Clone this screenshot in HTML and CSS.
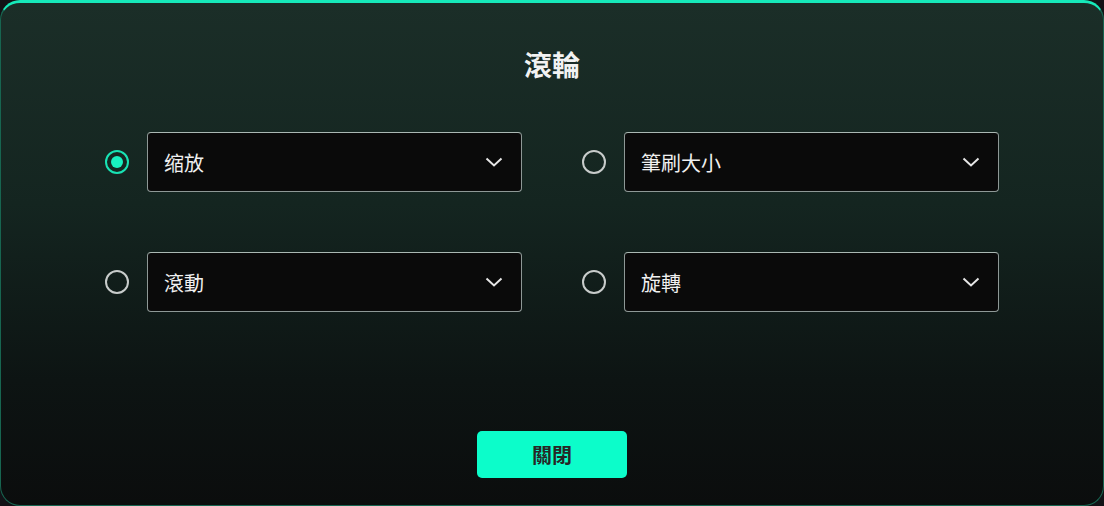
FILE: index.html
```html
<!DOCTYPE html>
<html lang="zh-Hant">
<head>
<meta charset="utf-8">
<link rel="stylesheet" href="styles.css">
</head>
<body>
<div class="panel">
  <h1 class="title">滾輪</h1>
  <div class="grid">
    <div class="option">
      <span class="radio checked"></span>
      <div class="select"><span class="label">缩放</span>
        <svg class="chev" width="18" height="10" viewBox="0 0 18 10"><polyline points="1.5,1.5 9,8.5 16.5,1.5" fill="none" stroke="#e6e6e6" stroke-width="2"/></svg>
      </div>
    </div>
    <div class="option">
      <span class="radio"></span>
      <div class="select"><span class="label">筆刷大小</span>
        <svg class="chev" width="18" height="10" viewBox="0 0 18 10"><polyline points="1.5,1.5 9,8.5 16.5,1.5" fill="none" stroke="#e6e6e6" stroke-width="2"/></svg>
      </div>
    </div>
    <div class="option">
      <span class="radio"></span>
      <div class="select"><span class="label">滾動</span>
        <svg class="chev" width="18" height="10" viewBox="0 0 18 10"><polyline points="1.5,1.5 9,8.5 16.5,1.5" fill="none" stroke="#e6e6e6" stroke-width="2"/></svg>
      </div>
    </div>
    <div class="option">
      <span class="radio"></span>
      <div class="select"><span class="label">旋轉</span>
        <svg class="chev" width="18" height="10" viewBox="0 0 18 10"><polyline points="1.5,1.5 9,8.5 16.5,1.5" fill="none" stroke="#e6e6e6" stroke-width="2"/></svg>
      </div>
    </div>
  </div>
  <button class="close">關閉</button>
</div>
</body>
</html>
```
FILE: styles.css
```css
html, body {
  margin: 0;
  padding: 0;
  background: #121216;
}
body {
  width: 1104px;
  height: 506px;
  font-family: "Noto Sans CJK TC", "Noto Sans", sans-serif;
}
.panel {
  box-sizing: border-box;
  width: 1104px;
  height: 506px;
  border-radius: 20px;
  border: 1px solid #176550;
  border-top: 3px solid #16e9ba;
  background: linear-gradient(180deg, #1b2e28 0%, #142520 40%, #0d1413 75%, #0b0d0d 100%);
  display: flex;
  flex-direction: column;
  align-items: center;
  padding: 45px 104px 27px 104px;
}
.title {
  margin: 0;
  font-size: 28px;
  line-height: 32px;
  font-weight: 700;
  color: #f2f2f2;
}
.grid {
  margin-top: 52px;
  display: grid;
  grid-template-columns: 417px 417px;
  column-gap: 60px;
  row-gap: 60px;
}
.option {
  display: flex;
  align-items: center;
  gap: 18px;
  height: 60px;
}
.radio {
  box-sizing: border-box;
  width: 24px;
  height: 24px;
  border-radius: 50%;
  border: 2px solid #c8cccb;
  display: flex;
  align-items: center;
  justify-content: center;
  flex: none;
}
.radio.checked {
  border-color: #18e3b4;
}
.radio.checked::after {
  content: "";
  width: 12px;
  height: 12px;
  border-radius: 50%;
  background: #18f0c0;
}
.select {
  box-sizing: border-box;
  flex: 1;
  height: 60px;
  border: 1px solid #8e9896;
  border-top-color: #aab8b3;
  border-radius: 4px;
  background: #0a0a0a;
  display: flex;
  align-items: center;
  justify-content: space-between;
  padding: 0 18px 0 16px;
}
.label {
  color: #f0f0f0;
  font-size: 20px;
}
.chev {
  display: block;
}
.close {
  margin-top: auto;
  width: 150px;
  height: 47px;
  border: none;
  border-radius: 5px;
  background: #0cfdca;
  color: #262626;
  font-family: "Noto Sans CJK TC", sans-serif;
  font-size: 20px;
  font-weight: 700;
  padding: 0;
}
```
